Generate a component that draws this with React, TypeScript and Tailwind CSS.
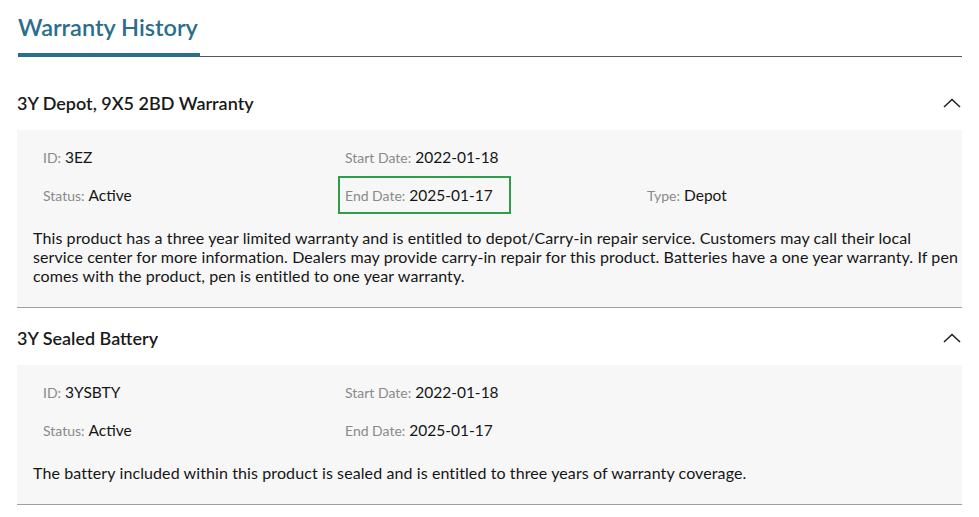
import React from "react";

function Chevron() {
  return (
    <svg width="18" height="10" viewBox="0 0 18 10" className="shrink-0">
      <polyline points="1,9 9,1.5 17,9" fill="none" stroke="#222" strokeWidth="1.6" />
    </svg>
  );
}

type Field = { label: string; value: string; highlight?: boolean } | null;

function Cell({ f }: { f: Field }) {
  if (!f) return <div className="h-[38px]" />;
  return (
    <div className="relative h-[38px] flex items-center pl-[7px] whitespace-nowrap">
      {f.highlight && (
        <div className="absolute left-0 top-0 h-[38px] w-[173px] border-2 border-[#2f9e4b]" />
      )}
      <span className="leading-[20px]">
        <span className="text-[14px] text-[#8a8a8a]">{f.label}:</span>
        <span className="text-[15.5px] text-[#151515] ml-[4px]">{f.value}</span>
      </span>
    </div>
  );
}

function Section({
  title,
  fields,
  lines,
}: {
  title: string;
  fields: Field[];
  lines: string[];
}) {
  return (
    <div>
      <div className="flex items-center justify-between pt-[18px] pb-[15px] pr-[1px]">
        <h3 className="text-[18px] leading-[24px] font-semibold text-[#1a1a1a]">{title}</h3>
        <Chevron />
      </div>
      <div className="bg-[#f7f7f7] border-b border-[#a0a0a0] pt-[8px] pb-[22px] pl-[16px] pr-[10px]">
        <div className="ml-[3px] grid grid-cols-[302px_302px_1fr]">
          {fields.map((f, i) => (
            <Cell key={i} f={f} />
          ))}
        </div>
        <p className="mt-[14px] text-[16px] leading-[19px] tracking-[0.1px] text-[#151515] whitespace-nowrap">
          {lines.map((l, i) => (
            <React.Fragment key={i}>
              {l}
              {i < lines.length - 1 && <br />}
            </React.Fragment>
          ))}
        </p>
      </div>
    </div>
  );
}

export default function App() {
  return (
    <div
      className="w-[979px] h-[517px] bg-white overflow-hidden pl-[17px] pr-[17px]"
      style={{ fontFamily: "Lato, 'Open Sans', sans-serif" }}
    >
      <div className="border-b border-[#555] mb-[16px] ml-[1px] pt-[11px]">
        <h2 className="inline-block whitespace-nowrap text-[23.5px] leading-[32px] font-semibold text-[#2a6e8e] pb-[10px] border-b-4 border-[#2a6e8e] -mb-px w-[182px]">
          Warranty History
        </h2>
      </div>
      <Section
        title="3Y Depot, 9X5 2BD Warranty"
        fields={[
          { label: "ID", value: "3EZ" },
          { label: "Start Date", value: "2022-01-18" },
          null,
          { label: "Status", value: "Active" },
          { label: "End Date", value: "2025-01-17", highlight: true },
          { label: "Type", value: "Depot" },
        ]}
        lines={[
          "This product has a three year limited warranty and is entitled to depot/Carry-in repair service. Customers may call their local",
          "service center for more information. Dealers may provide carry-in repair for this product. Batteries have a one year warranty. If pen",
          "comes with the product, pen is entitled to one year warranty.",
        ]}
      />
      <Section
        title="3Y Sealed Battery"
        fields={[
          { label: "ID", value: "3YSBTY" },
          { label: "Start Date", value: "2022-01-18" },
          null,
          { label: "Status", value: "Active" },
          { label: "End Date", value: "2025-01-17" },
          null,
        ]}
        lines={[
          "The battery included within this product is sealed and is entitled to three years of warranty coverage.",
        ]}
      />
    </div>
  );
}
